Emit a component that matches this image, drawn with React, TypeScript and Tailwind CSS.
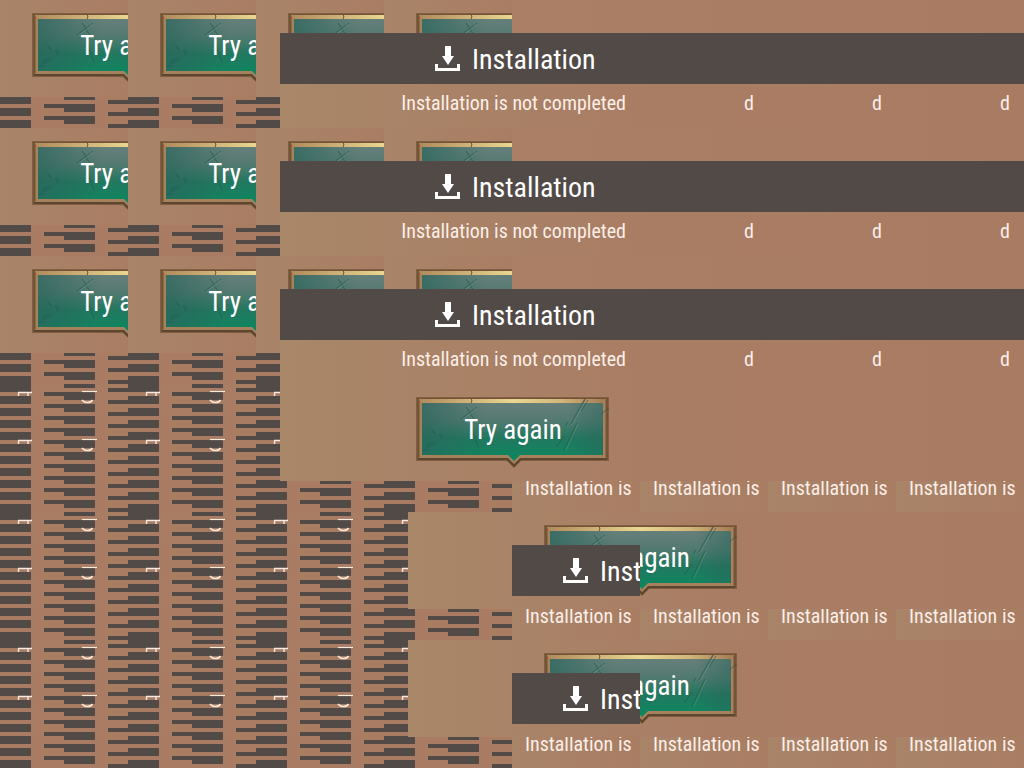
import React from 'react';
import clsx from 'clsx';

const rows = [0, 1, 2];

const DownloadIcon: React.FC = () => (
  <svg width="25" height="25" viewBox="0 0 25 25" fill="#fff" className="shrink-0" aria-hidden="true">
    <path d="M10 0h6v10h3l-6 9-6-9h3z" />
    <path d="M0 18h3v4h19v-4h3v7H0z" />
  </svg>
);

// chalkboard plate with a wooden frame and a small notch at the bottom
const Plate: React.FC = () => (
  <svg width="194" height="72" viewBox="0 0 194 72" className="absolute inset-0" aria-hidden="true">
    <defs>
      <linearGradient id="board" x1="0" y1="0" x2="0" y2="1">
        <stop offset="0" stopColor="#667f79" />
        <stop offset="0.3" stopColor="#537a71" />
        <stop offset="0.6" stopColor="#22785f" />
        <stop offset="1" stopColor="#0b8860" />
      </linearGradient>
      <linearGradient id="edge" x1="0" y1="0" x2="1" y2="0">
        <stop offset="0" stopColor="#2a655c" stopOpacity="0.7" />
        <stop offset="0.35" stopColor="#2a655c" stopOpacity="0" />
        <stop offset="0.8" stopColor="#2a655c" stopOpacity="0" />
        <stop offset="1" stopColor="#2a655c" stopOpacity="0.5" />
      </linearGradient>
      <linearGradient id="gold" x1="0" y1="0" x2="1" y2="0">
        <stop offset="0" stopColor="#b08a5c" />
        <stop offset="0.3" stopColor="#d3b87c" />
        <stop offset="0.5" stopColor="#ecd690" />
        <stop offset="0.75" stopColor="#d3b87c" />
        <stop offset="1" stopColor="#a37950" />
      </linearGradient>
    </defs>
    <path d="M0 0H193V64H105L98 71L91 64H0z" fill="#80603f" />
    <path d="M1 1H192V63H105L98 70L91 63H1z" fill="#75523a" />
    <path d="M2 61H92L98 67L104 61H191V63H105L98 70L91 63H2z" fill="#5e4532" />
    <path d="M3 2H190V61H104L98 67L92 61H3z" fill="#a5825a" />
    <path d="M3 2H190L187 6H6z" fill="url(#gold)" />
    <path d="M3.500 3V60M189.500 3V60" stroke="#8a6a49" />
    <path d="M6 6H187V58H104L98 64L92 58H6z" fill="url(#board)" />
    <path d="M6 6H187V58H6z" fill="url(#edge)" />
    <g fill="none" stroke="#22534c" strokeOpacity="0.6">
      <path d="M45 22l16-12M50 10l8 12M54 27l8 23M7 54l13-9M9 50l7-5M15 33l5 4M23 38l4 1-3 3" />
      <path d="M169 1l-14 26M172 3l-7 11M161 26l-13 27M140 50l8-11M193 11l-8 6M152 25l-3 4" />
    </g>
    <path d="M46 23l15-12M171 2l-15 26M162 27l-12 26" fill="none" stroke="#86a097" strokeOpacity="0.35" />
    <path d="M54 1l2 2-1 3M170 1l-3 5" fill="none" stroke="#73512f" />
  </svg>
);

const TryAgain: React.FC = () => (
  <button type="button" className="relative block w-[194px] h-[72px] pb-[6px] shrink-0 text-[27px] leading-8 text-white whitespace-nowrap">
    <Plate />
    <span className="relative">Try again</span>
  </button>
);

const InstallBar: React.FC<{ className: string }> = ({ className }) => (
  <div className={clsx('flex items-center gap-3 h-[51px] bg-[#524a46] overflow-hidden text-[28px] leading-8 text-white whitespace-nowrap', className)}>
    <DownloadIcon />
    <h2 className="pt-0.5">Installation</h2>
  </div>
);

const Stripes: React.FC<{ marks?: boolean }> = ({ marks }) => (
  <div className="relative flex w-32 h-32 shrink-0 bg-linear-to-b from-[#a87d64] to-[#a97b62]">
    <div className="w-[31px] mr-[13px] bg-[repeating-linear-gradient(#524a46_0_8px,transparent_8px_12px)]" />
    <div className="w-5 bg-[repeating-linear-gradient(transparent_0_8px,#524a46_8px_12px)]" />
    <div className="w-[31px] mr-[13px] bg-[repeating-linear-gradient(#524a46_0_4px,transparent_4px_8px,#524a46_8px_12px)]" />
    <div className="w-5 bg-[repeating-linear-gradient(transparent_0_4px,#524a46_4px_8px,transparent_8px_12px)]" />
    {marks && (
      <svg width="128" height="128" className="absolute inset-0" fill="none" stroke="#f8e9e0" aria-hidden="true">
        {[7, 55].map(y => (
          <g key={y}>
            <path d={`M18 ${y + 1}.5h14M18.500 ${y + 2}v3M28 ${y + 2}v3`} strokeWidth="1.4" />
            <path d={`M82 ${y}.5h15`} strokeWidth="1.2" />
            <path d={`M82 ${y + 9}q2 2.500 5.500 2.500t5-2.500`} strokeWidth="1.6" />
          </g>
        ))}
      </svg>
    )}
  </div>
);

const tile = 'w-32 shrink-0 overflow-hidden bg-linear-to-r from-[#a98468] to-[#a97d64]';

const TextCells: React.FC = () => (
  <>
    {[0, 1, 2, 3].map(i => (
      <p key={i} className={clsx(tile, 'pl-[13px] text-xl leading-[14px] whitespace-nowrap')}>Installation is</p>
    ))}
  </>
);

const TopRow: React.FC = () => (
  <section className="flex h-32">
    <div className="w-[280px] shrink-0 flex flex-col overflow-hidden">
      <div className="flex h-[97px]">
        {[0, 1].map(i => (
          <div key={i} className={clsx(tile, 'pl-8 pt-[13px]')}><TryAgain /></div>
        ))}
        <div className={tile} />
      </div>
      <div className="flex items-end h-[31px] overflow-hidden">
        {rows.map(i => <Stripes key={i} />)}
      </div>
    </div>
    <div className="flex-1 min-w-0">
      <div className="flex h-[33px] overflow-hidden bg-linear-to-r from-[#aa8166] to-[#a97b62]">
        <div className="w-[104px] shrink-0 overflow-hidden pl-2 pt-[13px] bg-linear-to-r from-[#a98367] to-[#a97d64]"><TryAgain /></div>
        <div className={clsx(tile, 'pl-8 pt-[13px]')}><TryAgain /></div>
      </div>
      <InstallBar className="pl-[155px]" />
      <div className="flex h-11 pt-[7px] text-xl leading-6 whitespace-nowrap bg-linear-to-r from-[#a98769] via-[#a97d64] to-[#a97b62]">
        <p className="w-[360px] pr-[14px] text-right shrink-0">Installation is not completed</p>
        {rows.map(i => (
          <span key={i} className="w-32 pr-[14px] text-right shrink-0">d</span>
        ))}
      </div>
    </div>
  </section>
);

const LowerRow: React.FC<{ wide?: boolean }> = ({ wide }) => (
  <section className="flex h-32">
    <div className={clsx('flex shrink-0 overflow-hidden', wide ? 'w-[280px]' : 'w-[408px]')}>
      {[0, 1, 2, 3].map(i => <Stripes key={i} marks />)}
    </div>
    <div className="flex-1 min-w-0">
      <div className="relative h-[97px] pl-[136px] pt-[13px] bg-linear-to-r from-[#a98769] via-[#a97d64] to-[#a97b62]">
        <TryAgain />
        {!wide && (
          <div className="absolute left-[104px] top-[33px] w-32">
            <InstallBar className="pl-[51px]" />
          </div>
        )}
      </div>
      <div className="flex h-[31px] overflow-hidden">
        <div className={clsx('flex items-end justify-end shrink-0 overflow-hidden', wide ? 'w-[232px]' : 'w-[104px]')}>
          {wide && <Stripes />}
          <Stripes />
        </div>
        <TextCells />
      </div>
    </div>
  </section>
);

export default function App() {
  return (
    <main className="w-full overflow-hidden bg-[#a97b62] text-[#fbeee7] font-['Roboto_Condensed','Liberation_Sans_Narrow',Roboto,sans-serif]">
      {rows.map(i => <TopRow key={i} />)}
      <LowerRow wide />
      <LowerRow />
      <LowerRow />
    </main>
  );
}
